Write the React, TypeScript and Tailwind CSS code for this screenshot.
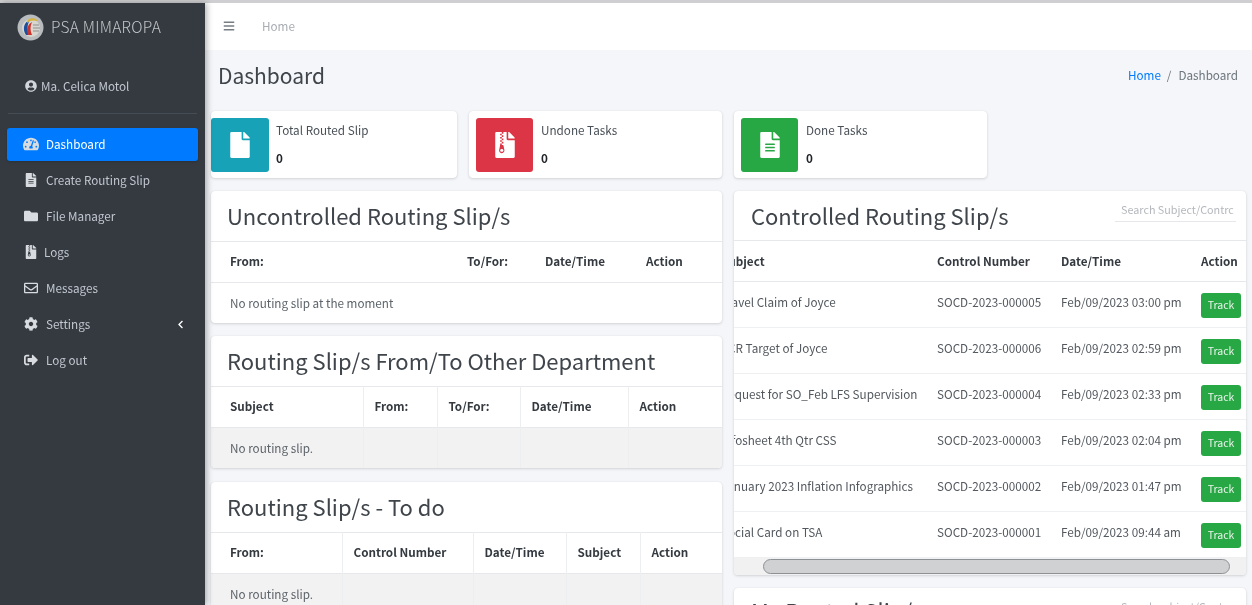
import React from "react";
import {
  FaBars,
  FaChevronLeft,
  FaCog,
  FaFile,
  FaFileAlt,
  FaFileArchive,
  FaFolder,
  FaRegEnvelope,
  FaSignOutAlt,
  FaTachometerAlt,
  FaUserCircle,
} from "react-icons/fa";

const font = { fontFamily: '"Noto Sans CJK SC", "Noto Sans", sans-serif' };

function Logo() {
  return (
    <svg width="27" height="27" viewBox="0 0 27 27" className="shrink-0">
      <circle cx="13.5" cy="13.5" r="13" fill="#b9bcbf" />
      <circle cx="14" cy="14" r="9" fill="#d9d6cf" />
      <path d="M9 21 C5 15 7 8 13 6 C10 10 10 16 12 21 Z" fill="#1d4f9c" />
      <path d="M10 7 C13 3 19 4 21 7 C17 6 13 6 10 9 Z" fill="#d8b23a" />
      <path d="M11 21 C9 15 11 10 15 8 C13 12 13 17 15 21 Z" fill="#c9352e" />
      <path d="M16 11 H22 M16 14 H23 M16 17 H22" stroke="#8f8f8f" strokeWidth="1" />
    </svg>
  );
}

const nav = [
  { label: "Dashboard", icon: <FaTachometerAlt className="text-[16px]" />, active: true },
  { label: "Create Routing Slip", icon: <FaFileAlt /> },
  { label: "File Manager", icon: <FaFolder /> },
  { label: "Logs", icon: <FaFileArchive />, tight: true },
  { label: "Messages", icon: <FaRegEnvelope /> },
  { label: "Settings", icon: <FaCog />, caret: true },
  { label: "Log out", icon: <FaSignOutAlt /> },
];

function Sidebar() {
  return (
    <aside className="relative z-10 flex w-[205px] shrink-0 flex-col bg-[#343a40] shadow-[2px_0_6px_rgba(0,0,0,0.3)]">
      <div className="flex h-[48px] items-center gap-[7px] pl-[17px]">
        <Logo />
        <span className="text-[15.5px] font-light tracking-[0.25px] text-[#c3c6c9]">PSA MIMAROPA</span>
      </div>
      <div className="mx-[8px] flex h-[63px] items-center gap-[4px] border-b border-[#454c53] pt-[8px] pl-[17px]">
        <FaUserCircle className="text-[12px] text-[#d2d6dc]" />
        <span className="text-[11.7px] text-[#c2c7d0]">Ma. Celica Motol</span>
      </div>
      <nav className="mt-[14px] flex flex-col gap-[3px] px-[7px]">
        {nav.map((item) => (
          <div
            key={item.label}
            className={
              item.active
                ? "flex h-[33px] items-center rounded-[3px] bg-[#007bff] pb-[1px] pl-[16px] text-white shadow-sm"
                : "flex h-[33px] items-center pb-[1px] pl-[16px] text-[#c2c7d0]"
            }
          >
            <span className="flex w-[16px] shrink-0 items-center justify-center text-[14px] text-[#d8dbe0]">{item.icon}</span>
            <span className={item.tight ? "ml-[5px] text-[11.7px]" : "ml-[7px] text-[11.7px]"}>{item.label}</span>
            {item.caret && <FaChevronLeft className="mr-[13px] ml-auto text-[9px] text-white" />}
          </div>
        ))}
      </nav>
    </aside>
  );
}

function Card({ children, className = "" }: { children: React.ReactNode; className?: string }) {
  return <section className={"overflow-hidden rounded-[4px] bg-white shadow-[0_0_1px_rgba(0,0,0,0.1),0_1px_3px_rgba(0,0,0,0.14)] " + className}>{children}</section>;
}

function InfoBox({ title, bg, icon, width }: { title: string; bg: string; icon: React.ReactNode; width: string }) {
  return (
    <div className={"flex h-[67px] rounded-[4px] bg-white shadow-[0_0_1px_rgba(0,0,0,0.1),0_1px_3px_rgba(0,0,0,0.14)] " + width}>
      {bg === "teal" && <div className="mt-[7px] flex h-[54px] w-[58px] shrink-0 items-center justify-center self-start rounded-[3px] bg-[#17a2b8] text-[26px] text-white">{icon}</div>}
      {bg === "red" && <div className="mt-[7px] ml-[7px] flex h-[54px] w-[57px] shrink-0 items-center justify-center self-start rounded-[3px] bg-[#dc3545] text-[26px] text-white">{icon}</div>}
      {bg === "green" && <div className="mt-[7px] ml-[7px] flex h-[54px] w-[57px] shrink-0 items-center justify-center self-start rounded-[3px] bg-[#28a745] text-[26px] text-white">{icon}</div>}
      <div className={bg === "teal" ? "ml-[7px] flex flex-col pt-[11px]" : "ml-[8px] flex flex-col pt-[11px]"}>
        <span className="text-[11.7px] leading-[16px] text-[#495057]">{title}</span>
        <span className="mt-[12px] text-[11.7px] leading-[16px] font-bold text-[#212529]">0</span>
      </div>
    </div>
  );
}

function CardTitle({ children }: { children: React.ReactNode }) {
  return <h3 className="h-[50px] text-[22px] leading-[48px] font-normal text-[#3f454b]">{children}</h3>;
}

type TableProps = { headers: string[]; cols: number[]; lined?: boolean; empty: string };

function SimpleTable({ headers, cols, lined, empty }: TableProps) {
  const edge = lined ? "border-r border-[#eceef0] last:border-r-0" : "";
  return (
    <table className="w-full table-fixed border-collapse text-[11.7px]">
      <colgroup>
        {cols.map((c, i) => (
          <col key={i} style={{ width: c }} />
        ))}
      </colgroup>
      <thead>
        <tr className="h-[41px] border-t border-b border-[#e6e8eb]">
          {headers.map((h) => (
            <th key={h} className={"pb-[2px] pl-[11px] text-left font-bold whitespace-nowrap text-[#343a40] first:pl-[19px] " + edge}>
              {h}
            </th>
          ))}
        </tr>
      </thead>
      <tbody>
        <tr className={lined ? "h-[41px] bg-[#f2f2f2]" : "h-[40px]"}>
          <td colSpan={lined ? 1 : cols.length} className={"pl-[19px] whitespace-nowrap text-[#5c6369] " + edge}>
            {empty}
          </td>
          {lined && headers.slice(1).map((h) => <td key={h} className={edge} />)}
        </tr>
      </tbody>
    </table>
  );
}

const rows = [
  ["Travel Claim of Joyce", "SOCD-2023-000005", "Feb/09/2023 03:00 pm"],
  ["CCR Target of Joyce", "SOCD-2023-000006", "Feb/09/2023 02:59 pm"],
  ["Request for SO_Feb LFS Supervision", "SOCD-2023-000004", "Feb/09/2023 02:33 pm"],
  ["Infosheet 4th Qtr CSS", "SOCD-2023-000003", "Feb/09/2023 02:04 pm"],
  ["January 2023 Inflation Infographics", "SOCD-2023-000002", "Feb/09/2023 01:47 pm"],
  ["Social Card on TSA", "SOCD-2023-000001", "Feb/09/2023 09:44 am"],
];

function ControlledTable() {
  return (
    <div className="overflow-hidden">
      <table className="ml-[-23px] w-[550px] table-fixed border-collapse text-[11.7px]">
        <colgroup>
          <col className="w-[218px]" />
          <col className="w-[124px]" />
          <col className="w-[140px]" />
          <col className="w-[68px]" />
        </colgroup>
        <thead>
          <tr className="h-[40px] border-b border-[#e6e8eb] text-left text-[#343a40]">
            <th className="pl-[10px] font-bold whitespace-nowrap">Subject</th>
            <th className="pl-[8px] font-bold whitespace-nowrap">Control Number</th>
            <th className="pl-[8px] font-bold whitespace-nowrap">Date/Time</th>
            <th className="pl-[8px] font-bold whitespace-nowrap">Action</th>
          </tr>
        </thead>
        <tbody>
          {rows.map((r) => (
            <tr key={r[1]} className="h-[46px] border-b border-[#eff0f2] text-[#52585e]">
              <td className="pb-[4px] pl-[10px] whitespace-nowrap">{r[0]}</td>
              <td className="pb-[4px] pl-[8px] whitespace-nowrap">{r[1]}</td>
              <td className="pb-[4px] pl-[8px] whitespace-nowrap">{r[2]}</td>
              <td className="pl-[8px]">
                <button className="mt-[2px] flex h-[25px] w-[40px] items-center justify-center rounded-[3px] bg-[#28a745] text-[10.5px] text-[#e8f5ea]">
                  Track
                </button>
              </td>
            </tr>
          ))}
        </tbody>
      </table>
      <div className="flex h-[17px] items-center bg-[#f1f1f1] pr-[16px] pl-[29px]">
        <div className="h-[15px] w-full rounded-full border border-[#8d9196] bg-[#cfd1d2]" />
      </div>
    </div>
  );
}

export default function App() {
  return (
    <div style={font} className="flex h-[605px] w-[1252px] flex-col overflow-hidden bg-[#f4f6f9] blur-[0.35px]">
      <div className="h-[3px] shrink-0 bg-[#cfcfd1]" />
      <div className="flex min-h-0 flex-1">
        <Sidebar />
        <main className="min-w-0 flex-1">
          <header className="flex h-[47px] items-center bg-white pb-[2px] pl-[18px]">
            <FaBars className="text-[12px] text-[#777d83]" />
            <span className="ml-[27px] text-[11.7px] text-[#a8adb2]">Home</span>
          </header>
          <div className="flex h-[61px] items-center justify-between pr-[14px] pb-[10px] pl-[13px]">
            <h1 className="pt-[1px] text-[21px] font-normal text-[#3f454b]">Dashboard</h1>
            <div className="pb-[2px] text-[11.7px] text-[#6c757d]">
              <span className="text-[#007bff]">Home</span>
              <span className="mr-[7px] ml-[6px]">/</span>
              <span>Dashboard</span>
            </div>
          </div>
          <div className="flex gap-[12px] pl-[6px]">
            <div className="flex w-[511px] shrink-0 flex-col">
              <div className="flex gap-[12px]">
                <InfoBox title="Total Routed Slip" bg="teal" icon={<FaFile />} width="w-[246px]" />
                <InfoBox title="Undone Tasks" bg="red" icon={<FaFileArchive />} width="w-[253px]" />
              </div>
              <Card className="mt-[13px]">
                <div className="pl-[16px]"><CardTitle>Uncontrolled Routing Slip/s</CardTitle></div>
                <SimpleTable headers={["From:", "To/For:", "Date/Time", "Action"]} cols={[245, 78, 101, 87]} empty="No routing slip at the moment" />
              </Card>
              <Card className="mt-[13px]">
                <div className="pl-[16px]"><CardTitle>Routing Slip/s From/To Other Department</CardTitle></div>
                <SimpleTable lined headers={["Subject", "From:", "To/For:", "Date/Time", "Action"]} cols={[152, 74, 83, 108, 94]} empty="No routing slip." />
              </Card>
              <Card className="mt-[14px]">
                <div className="pl-[16px]"><CardTitle>Routing Slip/s - To do</CardTitle></div>
                <SimpleTable lined headers={["From:", "Control Number", "Date/Time", "Subject", "Action"]} cols={[131, 131, 93, 74, 82]} empty="No routing slip." />
              </Card>
            </div>
            <div className="flex w-[512px] shrink-0 flex-col">
              <InfoBox title="Done Tasks" bg="green" icon={<FaFileAlt />} width="w-[253px]" />
              <Card className="mt-[13px]">
                <div className="flex h-[50px] items-start justify-between border-b border-[#e6e8eb] pr-[10px] pl-[17px]">
                  <CardTitle>Controlled Routing Slip/s</CardTitle>
                  <input
                    readOnly
                    placeholder="Search Subject/Contrc"
                    className="mt-[5px] h-[26px] w-[121px] border-b border-[#e5e7ea] pl-[6px] text-[10.8px] outline-none placeholder:text-[#b4b8bc]"
                  />
                </div>
                <ControlledTable />
              </Card>
              <Card className="mt-[13px]">
                <div className="flex h-[50px] items-start justify-between pr-[10px] pl-[17px]">
                  <h3 className="mt-[-3px] text-[22px] leading-[50px] font-normal text-[#3f454b]">My Routed Slip/s</h3>
                  <input
                    readOnly
                    placeholder="Search subject/Contro"
                    className="mt-[5px] h-[26px] w-[121px] pl-[6px] text-[10.8px] outline-none placeholder:text-[#b4b8bc]"
                  />
                </div>
              </Card>
            </div>
          </div>
        </main>
      </div>
    </div>
  );
}
